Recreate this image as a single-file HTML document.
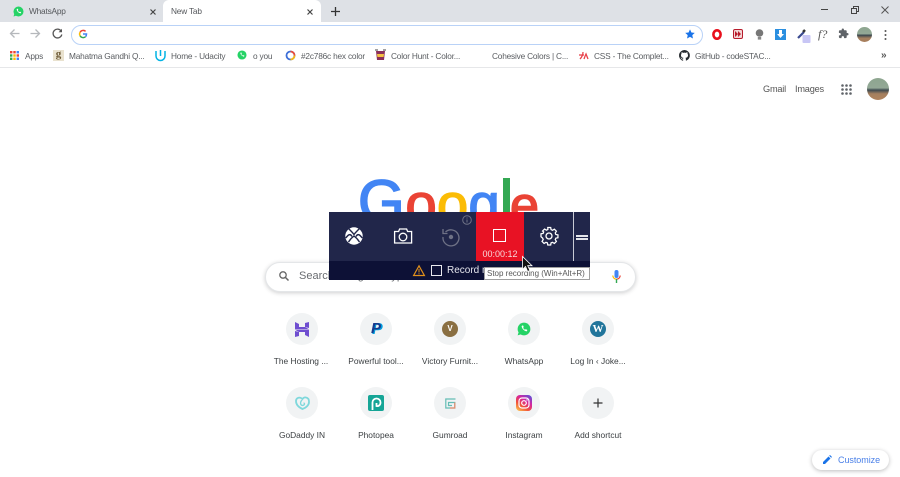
<!DOCTYPE html>
<html><head><meta charset="utf-8">
<style>
html,body{margin:0;padding:0;background:#fff;width:900px;height:477px;overflow:hidden}
body{font-family:"Liberation Sans",sans-serif;position:relative;color:#5f6368}
.a{position:absolute}
.t{position:absolute;white-space:nowrap;font-size:8.3px;letter-spacing:-.2px;line-height:12px;color:#5a5d61}
.bm{top:50px}
.c{position:absolute;width:32px;height:32px;border-radius:50%;background:#f1f3f4}
.l{position:absolute;width:74px;text-align:center;font-size:8.400px;line-height:12px;color:#3c4043;white-space:nowrap}
svg{position:absolute;overflow:visible}
</style></head><body>
<div class="a" style="left:0;top:0;width:900px;height:22px;background:#dee1e6"></div>
<div class="a" style="left:163px;top:0;width:158px;height:22px;background:#fff;border-radius:6px 6px 0 0"></div>
<div class="a" style="left:0;top:22px;width:900px;height:45px;background:#fff"></div>
<div class="a" style="left:0;top:67px;width:900px;height:1px;background:#e6e7e9"></div>

<!-- tabs -->
<svg style="left:13px;top:6px" width="11" height="11" viewBox="0 0 11 11"><circle cx="5.500" cy="5.500" r="5" fill="#25d366"/><path d="M.5 10.500l.8-2.600 1.700 1.800z" fill="#25d366"/><path d="M3.600 3.200c.4 2.200 1.800 3.600 4 4.200l.6-1.100-1.300-.7-.6.5c-.7-.4-1.200-.9-1.500-1.600l.5-.6-.6-1.300z" fill="#fff"/></svg>
<div class="t" style="left:29px;top:5px;color:#55585c">WhatsApp</div>
<svg style="left:150px;top:9px" width="6" height="6"><path d="M.5.5l5 5M5.500.5l-5 5" stroke="#444" stroke-width="1.200"/></svg>
<div class="t" style="left:171px;top:5px;color:#55585c">New Tab</div>
<svg style="left:307px;top:9px" width="6" height="6"><path d="M.5.5l5 5M5.500.5l-5 5" stroke="#444" stroke-width="1.200"/></svg>
<svg style="left:331px;top:7px" width="9" height="9"><path d="M4.500 0v9M0 4.500h9" stroke="#333" stroke-width="1.300"/></svg>
<!-- window controls -->
<div class="a" style="left:821px;top:9px;width:7px;height:1px;background:#444"></div>
<svg style="left:851px;top:6px" width="8" height="8"><path d="M.5 2.500h5v5h-5zM2.500 2.500v-2h5v5h-2" fill="none" stroke="#444"/></svg>
<svg style="left:881px;top:6px" width="8" height="8"><path d="M.5.5l7 7M7.500.5l-7 7" stroke="#555" stroke-width="1"/></svg>

<!-- nav -->
<svg style="left:9px;top:28px" width="11" height="11"><path d="M10.500 5.500H1.500M5.500 1.500l-4 4 4 4" fill="none" stroke="#b5b8bc" stroke-width="1.300"/></svg>
<svg style="left:30px;top:28px" width="11" height="11"><path d="M.5 5.500h9M5.500 1.500l4 4-4 4" fill="none" stroke="#b5b8bc" stroke-width="1.300"/></svg>
<svg style="left:52px;top:28px" width="11" height="11"><path d="M9.300 3.300A4.400 4.400 0 1 0 9.800 6.500" fill="none" stroke="#555" stroke-width="1.300"/><path d="M10 .8v3.400H6.600z" fill="#555"/></svg>
<div class="a" style="left:71px;top:25px;width:630px;height:18px;border:1.300px solid #b9d2f7;border-radius:10px;background:#fff"></div>
<svg style="left:79px;top:30px" width="8" height="8" viewBox="0 0 8 8" fill="none" stroke-width="1.500"><path d="M6.600 1.400A3.500 3.500 0 0 0 1.100 2.200" stroke="#ea4335"/><path d="M1.100 2.200a3.500 3.500 0 0 0 0 3.600" stroke="#fbbc05"/><path d="M1.100 5.800A3.500 3.500 0 0 0 6.600 6.600" stroke="#34a853"/><path d="M6.600 6.600C7.300 6 7.500 5 7.500 4H4" stroke="#4285f4"/></svg>
<svg style="left:685px;top:29px" width="10" height="10" viewBox="0 0 24 24"><path d="M12 1l3.400 7.300 8 1-5.900 5.500 1.600 8L12 18.800 4.900 22.800l1.600-8L.6 9.300l8-1z" fill="#1a73e8"/></svg>

<!-- extensions -->
<svg style="left:712px;top:29px" width="10" height="11"><ellipse cx="5" cy="5.500" rx="3.600" ry="4.200" fill="none" stroke="#e8101c" stroke-width="2.600"/></svg>
<div class="a" style="left:733px;top:29px;width:8px;height:8px;background:#f3d6d6;border:1px solid #b71c2c;border-radius:2px"></div>
<svg style="left:735px;top:31px" width="6" height="6"><path d="M0 0l3 3-3 3zM3 0l3 3-3 3z" fill="#b71c2c"/></svg>
<svg style="left:755px;top:29px" width="9" height="11"><circle cx="4.500" cy="4" r="3.800" fill="#777"/><rect x="2.800" y="8" width="3.400" height="2.600" fill="#888"/></svg>
<div class="a" style="left:775px;top:29px;width:11px;height:11px;background:#2b8fe0"></div>
<svg style="left:777px;top:30px" width="7" height="9"><path d="M2 0h3v4h2L3.500 8 0 4h2z" fill="#fff"/></svg>
<svg style="left:797px;top:28px" width="14" height="15"><path d="M1 10l6-6" stroke="#3a4a90" stroke-width="2.200"/><path d="M6 4l2-2" stroke="#333" stroke-width="2.500"/><rect x="5.500" y="7" width="8" height="8" rx="1" fill="#c8c6f5"/></svg>
<div class="a" style="left:818px;top:27px;font:italic 12px/14px 'Liberation Serif',serif;color:#555">f?</div>
<svg style="left:838px;top:28px" width="11" height="11" viewBox="0 0 24 24"><path d="M20.500 11H19V7a2 2 0 0 0-2-2h-4V3.500a2.500 2.500 0 0 0-5 0V5H4a2 2 0 0 0-2 2v3.800h1.500a2.700 2.700 0 0 1 0 5.400H2V20a2 2 0 0 0 2 2h3.800v-1.500a2.700 2.700 0 0 1 5.400 0V22H17a2 2 0 0 0 2-2v-4h1.500a2.500 2.500 0 0 0 0-5z" fill="#5f6368"/></svg>
<div class="a" style="left:857px;top:27px;width:15px;height:15px;border-radius:50%;overflow:hidden;background:linear-gradient(#8da58f 0,#93a896 45%,#3e4a50 55%,#a5805f 75%,#a87e5c 100%)"></div>
<svg style="left:884px;top:30px" width="3" height="10"><circle cx="1.500" cy="1" r="1" fill="#555"/><circle cx="1.500" cy="5" r="1" fill="#555"/><circle cx="1.500" cy="9" r="1" fill="#555"/></svg>

<!-- bookmarks -->
<svg style="left:10px;top:51px" width="9" height="9"><g fill="#ea4335"><rect width="2.400" height="2.400"/><rect x="3.300" width="2.400" height="2.400"/></g><rect x="6.600" width="2.400" height="2.400" fill="#4285f4"/><rect y="3.300" width="2.400" height="2.400" fill="#34a853"/><rect x="3.300" y="3.300" width="2.400" height="2.400" fill="#fbbc05"/><rect x="6.600" y="3.300" width="2.400" height="2.400" fill="#ea4335"/><rect y="6.600" width="2.400" height="2.400" fill="#34a853"/><rect x="3.300" y="6.600" width="2.400" height="2.400" fill="#fbbc05"/><rect x="6.600" y="6.600" width="2.400" height="2.400" fill="#4285f4"/></svg>
<div class="t bm" style="left:25px">Apps</div>
<div class="a" style="left:53px;top:50px;width:11px;height:11px;background:#e9e2cf;color:#6d5a36;font:bold 11px/9px 'Liberation Serif',serif;text-align:center">g</div>
<div class="t bm" style="left:69px">Mahatma Gandhi Q...</div>
<svg style="left:155px;top:50px" width="11" height="11"><path d="M1 1v5a4.500 4.500 0 0 0 9 0V1" fill="none" stroke="#02b3e4" stroke-width="1.500"/><path d="M5.500 0v6" stroke="#02b3e4" stroke-width="1.500"/></svg>
<div class="t bm" style="left:171px">Home - Udacity</div>
<svg style="left:237px;top:50px" width="10" height="10" viewBox="0 0 11 11"><circle cx="5.500" cy="5.500" r="5" fill="#25d366"/><path d="M3.600 3.200c.4 2.200 1.800 3.600 4 4.200l.6-1.100-1.300-.7-.6.5c-.7-.4-1.200-.9-1.500-1.600l.5-.6-.6-1.300z" fill="#fff"/></svg>
<div class="t bm" style="left:253px">o you</div>
<svg style="left:285px;top:50px" width="11" height="11"><circle cx="5.500" cy="5.500" r="4" fill="none" stroke="#3d6fd8" stroke-width="1.800"/><path d="M5.500 1.500a4 4 0 0 1 4 4" fill="none" stroke="#e84c3d" stroke-width="1.800"/><path d="M9.500 5.500a4 4 0 0 1-4 4" fill="none" stroke="#f5b918" stroke-width="1.800"/></svg>
<div class="t bm" style="left:301px">#2c786c hex color</div>
<svg style="left:375px;top:49px" width="11" height="12"><path d="M1 2h9l-1 9H2z" fill="#8c2f5a"/><path d="M2 5h7l-.4 3H2.400z" fill="#f5c242"/><path d="M0 1h3M8 1h3" stroke="#444"/></svg>
<div class="t bm" style="left:391px">Color Hunt - Color...</div>
<div class="t bm" style="left:492px">Cohesive Colors | C...</div>
<svg style="left:579px;top:51px" width="10" height="9"><path d="M1 8c2-2 3-5 3-7M0 4h5M5 8c1-3 2-5 2-5l2 5" fill="none" stroke="#e8414a" stroke-width="1.300"/></svg>
<div class="t bm" style="left:594px">CSS - The Complet...</div>
<svg style="left:679px;top:50px" width="11" height="11" viewBox="0 0 16 16"><path d="M8 0a8 8 0 0 0-2.500 15.600c.4.100.5-.2.500-.4v-1.400c-2.200.5-2.700-1-2.700-1-.4-.9-.9-1.200-.9-1.200-.7-.5.100-.5.100-.5.800.1 1.200.8 1.200.8.700 1.200 1.900.9 2.300.7.100-.5.300-.9.500-1.100-1.800-.2-3.600-.9-3.600-4 0-.9.300-1.600.8-2.100-.1-.2-.4-1 .1-2.100 0 0 .7-.2 2.200.8a7.600 7.600 0 0 1 4 0c1.500-1 2.200-.8 2.200-.8.400 1.100.2 1.900.1 2.100.5.600.8 1.300.8 2.100 0 3.100-1.900 3.700-3.700 3.900.3.300.6.800.6 1.500v2.200c0 .2.100.5.600.4A8 8 0 0 0 8 0z" fill="#24292e"/></svg>
<div class="t bm" style="left:695px">GitHub - codeSTAC...</div>
<div class="t" style="left:881px;top:50px;font-size:10px;color:#555;font-weight:bold;letter-spacing:0">»</div>

<!-- top right -->
<div class="t" style="left:763px;top:83px;font-size:9.200px;letter-spacing:-.2px;color:#555">Gmail</div>
<div class="t" style="left:795px;top:83px;font-size:9.200px;letter-spacing:-.2px;color:#555">Images</div>
<svg style="left:841px;top:84px" width="11" height="11" fill="#5f6368"><circle cx="1.500" cy="1.500" r="1.300"/><circle cx="5.500" cy="1.500" r="1.300"/><circle cx="9.500" cy="1.500" r="1.300"/><circle cx="1.500" cy="5.500" r="1.300"/><circle cx="5.500" cy="5.500" r="1.300"/><circle cx="9.500" cy="5.500" r="1.300"/><circle cx="1.500" cy="9.500" r="1.300"/><circle cx="5.500" cy="9.500" r="1.300"/><circle cx="9.500" cy="9.500" r="1.300"/></svg>
<div class="a" style="left:867px;top:78px;width:22px;height:22px;border-radius:50%;overflow:hidden;background:linear-gradient(#8da58f 0,#93a896 45%,#3e4a50 55%,#a5805f 72%,#b0835e 100%)"></div>

<!-- Google logo -->
<svg style="left:0;top:0" width="900" height="260"><g font-family="Liberation Sans" stroke-width="1.600"><text x="358" y="222" font-size="60" fill="#4285f4" stroke="#4285f4">G</text><text x="405.500" y="223" font-size="56" fill="#ea4335" stroke="#ea4335">o</text><text x="437" y="223" font-size="56" fill="#fbbc05" stroke="#fbbc05">o</text><text x="468.500" y="223" font-size="56" fill="#4285f4" stroke="#4285f4">g</text><text x="510" y="223" font-size="52" fill="#ea4335" stroke="#ea4335">e</text></g><rect x="503" y="178" width="7" height="40" fill="#34a853"/></svg>

<!-- search -->
<div class="a" style="left:265px;top:262px;width:369px;height:28px;border:1px solid #e4e6e8;border-radius:15px;background:#fff;box-shadow:0 1px 4px rgba(32,33,36,.22)"></div>
<svg style="left:279px;top:271px" width="10" height="10"><circle cx="4" cy="4" r="3.200" fill="none" stroke="#666" stroke-width="1.300"/><path d="M6.500 6.500l3 3" stroke="#666" stroke-width="1.500"/></svg>
<div class="t" style="left:299px;top:269px;font-size:11px;letter-spacing:0;line-height:14px;color:#6a6d71">Search Google or type a URL</div>
<svg style="left:612px;top:270px" width="9" height="14"><rect x="2.500" y="0" width="4" height="8" rx="2" fill="#4285f4"/><path d="M.8 5.500a3.700 3.700 0 0 0 3.700 3.700" fill="none" stroke="#fbbc05" stroke-width="1.200"/><path d="M8.200 5.500a3.700 3.700 0 0 1-3.700 3.700" fill="none" stroke="#ea4335" stroke-width="1.200"/><path d="M4.500 9v4" stroke="#34a853" stroke-width="1.400"/></svg>

<!-- tiles row 1 -->
<div class="c" style="left:286px;top:313px"></div>
<svg style="left:295px;top:322px" width="14" height="15" fill="#6f4ed0"><path d="M0 0l4 2v3h6l4 2.200H0z"/><path d="M10 1l4-1v6l-4-1z"/><path d="M14 15l-4-2v-3H4L0 7.800h14z"/><path d="M4 14l-4 1V9l4 1z"/></svg>
<div class="l" style="left:264px;top:355px">The Hosting ...</div>
<div class="c" style="left:360px;top:313px"></div>
<div class="a" style="left:372px;top:322px;font:italic bold 16px/16px 'Liberation Sans',sans-serif;color:#009cde">P</div>
<div class="a" style="left:371px;top:321px;font:italic bold 15px/16px 'Liberation Sans',sans-serif;color:#173a8c">P</div>
<div class="l" style="left:339px;top:355px">Powerful tool...</div>
<div class="c" style="left:434px;top:313px"></div>
<div class="a" style="left:442px;top:321px;width:16px;height:16px;border-radius:50%;background:#8a6f42;color:#fff;font:bold 8px/16px 'Liberation Sans',sans-serif;text-align:center">V</div>
<div class="l" style="left:413px;top:355px">Victory Furnit...</div>
<div class="c" style="left:508px;top:313px"></div>
<svg style="left:517px;top:322px" width="14" height="14" viewBox="0 0 11 11"><circle cx="5.500" cy="5.500" r="5" fill="#25d366"/><path d="M.5 10.500l.8-2.600 1.700 1.800z" fill="#25d366"/><path d="M3.600 3.200c.4 2.200 1.800 3.600 4 4.200l.6-1.100-1.300-.7-.6.500c-.7-.4-1.200-.9-1.500-1.600l.5-.6-.6-1.300z" fill="#fff"/></svg>
<div class="l" style="left:487px;top:355px">WhatsApp</div>
<div class="c" style="left:582px;top:313px"></div>
<div class="a" style="left:590px;top:321px;width:16px;height:16px;border-radius:50%;background:#21759b;color:#fff;font:bold 11px/16px 'Liberation Serif',serif;text-align:center">W</div>
<div class="l" style="left:561px;top:355px">Log In ‹ Joke...</div>

<!-- tiles row 2 -->
<div class="c" style="left:286px;top:387px"></div>
<svg style="left:295px;top:396px" width="15" height="14"><path d="M7.500 13C3 11 1 8 1 5c0-3 3-4 5-3 1 .5 1.500 1 1.500 1S9 1 11 1.500c3 .5 3 3 3 4.500 0 3-3 6-6.500 7z" fill="none" stroke="#7fd8dc" stroke-width="1.800"/><path d="M7 4C5 6 5 9 7.500 9.500 10 9 10 7 8.500 7" fill="none" stroke="#7fd8dc" stroke-width="1.300"/></svg>
<div class="l" style="left:265px;top:429px">GoDaddy IN</div>
<div class="c" style="left:360px;top:387px"></div>
<div class="a" style="left:368px;top:395px;width:16px;height:16px;border-radius:2px;background:#15a596"></div>
<svg style="left:371px;top:397px" width="11" height="13"><path d="M1.500 13V5.500a4 4 0 0 1 8 0c0 2.500-2 4-4 3.500V6" fill="none" stroke="#fff" stroke-width="1.800"/></svg>
<div class="l" style="left:339px;top:429px">Photopea</div>
<div class="c" style="left:434px;top:387px"></div>
<svg style="left:445px;top:398px" width="11" height="11"><path d="M10.500 1H.8v9h9V4.500H3.500V7.500H7" fill="none" stroke="#64bdb5" stroke-width="1.200"/><path d="M9.800 4.500V10H5" fill="none" stroke="#ea8d6d" stroke-width="1.200"/></svg>
<div class="l" style="left:413px;top:429px">Gumroad</div>
<div class="c" style="left:508px;top:387px"></div>
<div class="a" style="left:516px;top:395px;width:16px;height:16px;border-radius:4px;background:linear-gradient(35deg,#fdc14e 5%,#f0503a 35%,#d6249f 62%,#5b51d8 95%)"></div>
<svg style="left:518px;top:397px" width="12" height="12"><rect x="1" y="1" width="10" height="10" rx="3" fill="none" stroke="#fff" stroke-width="1.200"/><circle cx="6" cy="6" r="2.300" fill="none" stroke="#fff" stroke-width="1.200"/><circle cx="9" cy="3" r=".7" fill="#fff"/></svg>
<div class="l" style="left:487px;top:429px">Instagram</div>
<div class="c" style="left:582px;top:387px"></div>
<svg style="left:593px;top:398px" width="10" height="10"><path d="M5 .5v9M.5 5h9" stroke="#333" stroke-width="1.200"/></svg>
<div class="l" style="left:561px;top:429px">Add shortcut</div>

<!-- customize -->
<div class="a" style="left:812px;top:450px;width:77px;height:20px;border-radius:10px;background:#fff;box-shadow:0 1px 4px rgba(32,33,36,.3)"></div>
<svg style="left:823px;top:455px" width="9" height="9"><path d="M0 9V7l5.500-5.500 2 2L2 9zM6.200.8l.8-.8 2 2-.8.800z" fill="#1a73e8"/></svg>
<div class="t" style="left:838px;top:454px;font-size:9px;letter-spacing:-.05px;color:#4a80e8">Customize</div>

<!-- game bar -->
<div class="a" style="left:329px;top:212px;width:261px;height:49px;background:#21264a"></div>
<div class="a" style="left:329px;top:261px;width:261px;height:19px;background:#0d1136"></div>
<div class="a" style="left:476px;top:212px;width:48px;height:49px;background:#e81224"></div>
<div class="a" style="left:573px;top:212px;width:1px;height:49px;background:#c8cad4"></div>
<div class="a" style="left:576px;top:235px;width:12px;height:1.500px;background:#e4e5ea"></div>
<div class="a" style="left:576px;top:238px;width:12px;height:1.500px;background:#e4e5ea"></div>
<!-- xbox -->
<svg style="left:345px;top:227px" width="18" height="18"><circle cx="9" cy="9" r="8.700" fill="#fff"/><path d="M3.500 1.500C6 4 8 6 9 7.500 10 6 12 4 14.500 1.500M.8 11C3 8 5 6 7 9.500M17.200 11c-2.200-3-4.200-5-6.200-1.500M3.500 15C5 12.500 7 10.500 9 9c2 1.500 4 3.500 5.500 6" fill="none" stroke="#21264a" stroke-width="1.400"/></svg>
<!-- camera -->
<svg style="left:394px;top:228px" width="18" height="16"><path d="M.6 3.500h4l1-2.500h7l1 2.500h4v11.500H.6z" fill="none" stroke="#fff" stroke-width="1.300"/><circle cx="9" cy="9" r="3.800" fill="none" stroke="#fff" stroke-width="1.300"/></svg>
<!-- replay -->
<svg style="left:442px;top:228px" width="18" height="18"><path d="M3.500 4A8 8 0 1 1 1 9" fill="none" stroke="#6f7286" stroke-width="1.300"/><path d="M1 1v4.500h4.500" fill="none" stroke="#6f7286" stroke-width="1.300"/><circle cx="9" cy="9" r="2.200" fill="#6f7286"/></svg>
<svg style="left:462px;top:215px" width="11" height="11"><circle cx="5" cy="5" r="4.300" fill="none" stroke="#6f7286" stroke-width="1"/><path d="M5 2.500v1M5 4.500v3" stroke="#6f7286" stroke-width="1"/></svg>
<div class="a" style="left:493px;top:229px;width:11px;height:11px;border:1.300px solid #fff"></div>
<div class="t" style="left:476px;top:248px;width:48px;text-align:center;color:#f8d8da;font-size:9px;letter-spacing:0;line-height:12px">00:00:12</div>
<!-- gear -->
<svg style="left:540px;top:227px" width="18" height="18" viewBox="0 0 18 18"><path d="M7.500 1h3l.4 2.200 1.500.7 1.900-1.200 2.100 2.100-1.200 1.900.6 1.500 2.200.4v3l-2.200.4-.6 1.500 1.200 1.900-2.100 2.100-1.900-1.200-1.500.6-.4 2.200h-3l-.4-2.200-1.500-.6-1.900 1.200-2.100-2.100 1.200-1.900-.6-1.500L.5 10.500v-3l2.200-.4.600-1.500L2.100 4.700l2.100-2.100 1.900 1.200 1.500-.7z" fill="none" stroke="#fff" stroke-width="1.300" transform="translate(.5 -.5) scale(.97)"/><circle cx="9" cy="9" r="3" fill="none" stroke="#fff" stroke-width="1.300"/></svg>
<svg style="left:413px;top:265px" width="12" height="11"><path d="M6 .8L11.400 10.500H.6z" fill="none" stroke="#e0901c" stroke-width="1.200"/><path d="M6 4v3.500M6 8.300v1" stroke="#e0901c" stroke-width="1"/></svg>
<div class="a" style="left:431px;top:265px;width:9px;height:9px;border:1.200px solid #e8e8ee"></div>
<div class="t" style="left:447px;top:265px;font-size:10px;letter-spacing:0;color:#e4e5ec">Record m</div>
<!-- tooltip -->
<div class="a" style="left:484px;top:267px;width:104px;height:11px;background:#fff;border:1px solid #a0a0a0"></div>
<div class="t" style="left:487px;top:267px;font-size:8px;letter-spacing:0;line-height:13px;color:#575757">Stop recording (Win+Alt+R)</div>
<!-- cursor -->
<svg style="left:522px;top:256px" width="11" height="17"><path d="M.5.5v13l3-3 2.200 5 2.200-1-2.200-4.800h4.300z" fill="#111" stroke="#fff" stroke-width=".8"/></svg>
</body></html>
